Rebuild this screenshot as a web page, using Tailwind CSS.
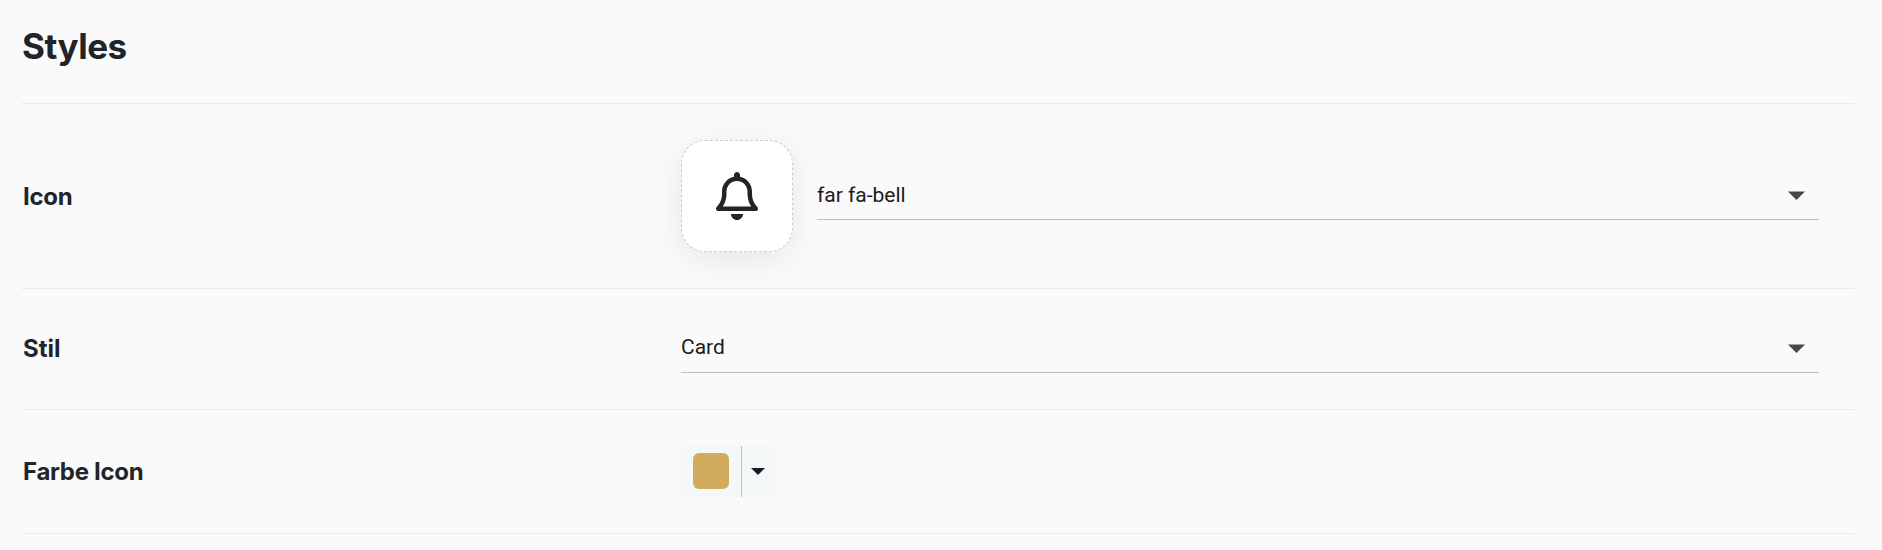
<!DOCTYPE html>
<html lang="de">
<head>
  <meta charset="UTF-8">
  <meta name="viewport" content="width=device-width, initial-scale=1.0">
  <title>Styles</title>
  <script src="https://cdn.jsdelivr.net/npm/@tailwindcss/browser@4"></script>
</head>
<body class="bg-[#fafafa] text-[#212529] font-['Inter',sans-serif]">
  <main class="pl-[22px] pr-[27px]">
    <header class="h-[104px] pt-[25px] border-b border-[#e9e9e9]">
      <h1 class="text-[35px] leading-[42px] font-bold tracking-[-0.5px]">Styles</h1>
    </header>

    <!-- Icon -->
    <div class="flex items-center h-[185px] border-b border-[#e9e9e9]">
      <div class="w-[659px] pt-px pl-px text-2xl font-bold tracking-[-0.3px]">Icon</div>
      <div class="flex flex-1 items-center gap-6 pr-9">
        <div class="flex size-28 items-center justify-center rounded-3xl border border-dashed border-[#cccccc] bg-white shadow-[0_8px_32px_rgba(0,0,0,0.08)]">
          <svg class="h-12 w-[42px]" viewBox="0 0 448 512" fill="currentColor">
            <path d="M224 0c-17.7 0-32 14.3-32 32V51.2C119 66 64 130.6 64 208v25.4c0 45.4-15.5 89.5-43.8 124.9L5.3 377c-5.8 7.2-6.9 17.1-2.9 25.4S14.8 416 24 416H424c9.2 0 17.6-5.3 21.6-13.6s2.9-18.2-2.9-25.4l-14.9-18.6C399.5 322.9 384 278.8 384 233.4V208c0-77.4-55-142-128-156.8V32c0-17.7-14.3-32-32-32zm0 96c61.9 0 112 50.1 112 112v25.4c0 47.9 13.9 94.6 39.7 134.6H72.3C98.1 328 112 281.3 112 233.4V208c0-61.9 50.1-112 112-112zm64 352H224 160c0 17 6.7 33.3 18.7 45.3s28.3 18.7 45.3 18.7s33.3-6.7 45.3-18.7s18.7-28.3 18.7-45.3z"/>
          </svg>
        </div>
        <div class="flex h-12 flex-1 items-center justify-between border-b border-[#bfbfbf] pr-3.5 font-['Roboto',sans-serif] text-[21px] text-[#1d1b20]">
          <span class="pt-px">far fa-bell</span>
          <svg class="h-[9px] w-[17px] text-[#49454f]" viewBox="0 0 17 9" fill="currentColor"><path d="M0 0.5h17L8.5 9z"/></svg>
        </div>
      </div>
    </div>

    <!-- Stil -->
    <div class="flex items-center h-[121px] border-b border-[#e9e9e9]">
      <div class="w-[659px] pl-px text-2xl font-bold">Stil</div>
      <div class="flex-1 pr-9">
        <div class="flex h-12 items-center justify-between border-b border-[#bfbfbf] pr-3.5 font-['Roboto',sans-serif] text-[21px] text-[#1d1b20]">
          <span class="pb-px">Card</span>
          <svg class="h-[9px] w-[17px] text-[#49454f]" viewBox="0 0 17 9" fill="currentColor"><path d="M0 0.5h17L8.5 9z"/></svg>
        </div>
      </div>
    </div>

    <!-- Farbe Icon -->
    <div class="flex items-center h-[124px] border-b border-[#e9e9e9]">
      <div class="w-[659px] pl-px text-2xl font-bold tracking-[-0.3px]">Farbe Icon</div>
      <div class="flex h-[51px] w-[94px] rounded-md bg-[#f5f8f8]">
        <div class="w-[61px] border-r border-[#bfc3c3] pt-[7px] pl-3">
          <div class="size-9 rounded-md bg-[#d2ac5e]"></div>
        </div>
        <div class="flex flex-1 items-center pl-[9px]">
          <svg class="h-[7px] w-3.5 text-[#1d1b20]" viewBox="0 0 14 7" fill="currentColor"><path d="M0 0h14L7 7z"/></svg>
        </div>
      </div>
    </div>
  </main>
</body>
</html>
